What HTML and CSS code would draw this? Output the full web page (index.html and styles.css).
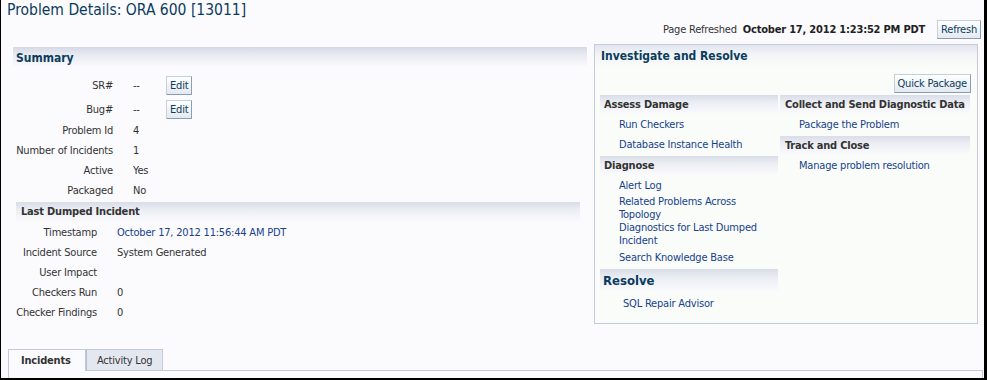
FILE: index.html
```html
<!DOCTYPE html>
<html lang="en">
<head>
  <meta charset="UTF-8">
  <title>Problem Details</title>
  <link rel="stylesheet" href="styles.css">
</head>
<body>
  <div class="page">
    <h1 class="title">Problem Details: ORA 600 [13011]</h1>

    <div class="refresh-bar">
      <span>Page Refreshed</span>
      <b class="refresh-date">October 17, 2012 1:23:52 PM PDT</b>
      <button class="btn">Refresh</button>
    </div>

    <div class="main">
      <div class="details">
        <div class="section-head">Summary</div>
        <div class="form summary-form">
          <div class="label">SR#</div>
          <div class="value"><span class="value-text">--</span><button class="btn">Edit</button></div>
          <div class="label">Bug#</div>
          <div class="value"><span class="value-text">--</span><button class="btn">Edit</button></div>
          <div class="label">Problem Id</div>
          <div class="value">4</div>
          <div class="label">Number of Incidents</div>
          <div class="value">1</div>
          <div class="label">Active</div>
          <div class="value">Yes</div>
          <div class="label">Packaged</div>
          <div class="value">No</div>
        </div>

        <div class="sub-head incident-head">Last Dumped Incident</div>
        <div class="form incident-form">
          <div class="label">Timestamp</div>
          <div class="value"><a class="link" href="#">October 17, 2012 11:56:44 AM PDT</a></div>
          <div class="label">Incident Source</div>
          <div class="value">System Generated</div>
          <div class="label">User Impact</div>
          <div class="value"></div>
          <div class="label">Checkers Run</div>
          <div class="value">0</div>
          <div class="label">Checker Findings</div>
          <div class="value">0</div>
        </div>
      </div>

      <div class="panel">
        <div class="panel-head">Investigate and Resolve</div>
        <div class="panel-tools"><button class="btn">Quick Package</button></div>
        <div class="panel-cols">
          <div class="col">
            <div class="sub-head">Assess Damage</div>
            <ul class="links">
              <li><a class="link" href="#">Run Checkers</a></li>
              <li><a class="link" href="#">Database Instance Health</a></li>
            </ul>
            <div class="sub-head">Diagnose</div>
            <ul class="links">
              <li><a class="link" href="#">Alert Log</a></li>
              <li><a class="link" href="#">Related Problems Across Topology</a></li>
              <li><a class="link" href="#">Diagnostics for Last Dumped Incident</a></li>
              <li><a class="link" href="#">Search Knowledge Base</a></li>
            </ul>
            <div class="sub-head resolve-head">Resolve</div>
            <ul class="links resolve-links">
              <li><a class="link" href="#">SQL Repair Advisor</a></li>
            </ul>
          </div>
          <div class="col col-right">
            <div class="sub-head">Collect and Send Diagnostic Data</div>
            <ul class="links">
              <li><a class="link" href="#">Package the Problem</a></li>
            </ul>
            <div class="sub-head">Track and Close</div>
            <ul class="links">
              <li><a class="link" href="#">Manage problem resolution</a></li>
            </ul>
          </div>
        </div>
      </div>
    </div>

    <div class="tabs">
      <div class="tab tab-active">Incidents</div>
      <div class="tab">Activity Log</div>
      <div class="tab-fill"></div>
    </div>
    <div class="tab-body"></div>
  </div>
</body>
</html>
```

FILE: styles.css
```css
body {
  margin: 0;
  font-family: "DejaVu Sans Condensed", "Liberation Sans", Arial, sans-serif;
  font-size: 11px;
  letter-spacing: -0.2px;
  color: #333333;
  background: #ffffff;
}

.page {
  width: 987px;
  height: 380px;
  box-sizing: border-box;
  border-left: 1px solid #000000;
  border-right: 3px solid #000000;
  border-bottom: 2px solid #000000;
  background: #fbfafd;
  overflow: hidden;
}

.title {
  margin: 0;
  padding-left: 6px;
  font-size: 15.5px;
  font-weight: normal;
  line-height: 20px;
  letter-spacing: 0;
  color: #0b3c5d;
}

.refresh-bar {
  display: flex;
  justify-content: flex-end;
  align-items: center;
  height: 19px;
  padding-right: 3px;
}

.refresh-date {
  margin: 0 12px 0 6px;
  color: #222222;
}

.btn {
  height: 19px;
  padding: 0 3px;
  font-family: inherit;
  font-size: 11px;
  letter-spacing: -0.2px;
  color: #0b3c5d;
  background: linear-gradient(#ffffff, #e4e9f0);
  border: 1px solid;
  border-color: #c6cfda #8c9db2 #8c9db2 #c6cfda;
  border-radius: 0;
}

.link {
  color: #163f8c;
  text-decoration: none;
}

/* layout */
.main {
  display: flex;
  align-items: flex-start;
  gap: 7px;
  padding: 5px 6px 0 12px;
}

.details {
  width: 574px;
  padding-top: 3px;
}

.section-head {
  height: 20px;
  padding: 3px 0 0 3px;
  box-sizing: border-box;
  font-size: 12px;
  font-weight: bold;
  line-height: 16px;
  letter-spacing: 0;
  color: #0b3c5d;
  background: linear-gradient(#d5d9e5 0, #e6e9f0 35%, #fbfafd 100%);
}

.sub-head {
  height: 19px;
  padding-left: 4px;
  font-weight: bold;
  line-height: 20px;
  white-space: nowrap;
  color: #333333;
  background: linear-gradient(#d9dde7 0, #eceef4 40%, #fbfbfd 100%);
}

.form {
  display: grid;
  column-gap: 20px;
  align-items: center;
}

.label {
  justify-self: end;
  white-space: nowrap;
}

.summary-form {
  grid-template-columns: 100px 1fr;
  grid-template-rows: 25px 22px repeat(4, 20px);
  padding-top: 6px;
}

.value {
  display: flex;
  align-items: center;
}

.value-text {
  width: 33px;
}

.incident-head {
  margin: 2px 7px 0 3px;
  height: 20px;
  padding-left: 5px;
}

.incident-form {
  grid-template-columns: 84px 1fr;
  grid-auto-rows: 20px;
}

/* investigate panel */
.panel {
  width: 384px;
  box-sizing: border-box;
  border: 1px solid #c5c9d8;
  background: #fafcfa;
  padding-bottom: 8px;
}

.panel-head {
  height: 22px;
  padding-left: 6px;
  font-size: 12px;
  font-weight: bold;
  line-height: 22px;
  letter-spacing: 0;
  color: #0b3c5d;
  background: linear-gradient(#e2e5ee 0, #f2f4f7 45%, #fafcfa 100%);
}

.panel-tools {
  display: flex;
  justify-content: flex-end;
  padding: 7px 6px 0 0;
}

.panel-cols {
  display: flex;
  gap: 2px;
  padding: 2px 7px 0 5px;
}

.col {
  width: 178px;
}

.col-right {
  width: 190px;
}

.col-right .sub-head {
  padding-left: 5px;
}

.links {
  list-style: none;
  margin: 0 0 2px;
  padding: 0 0 0 19px;
}

.links li {
  display: flex;
  align-items: center;
  min-height: 20px;
  line-height: 13px;
}

.resolve-head {
  height: 23px;
  padding-left: 3px;
  font-size: 13px;
  line-height: 24px;
  letter-spacing: 0;
  color: #0b3c5d;
}

.resolve-links {
  padding-left: 23px;
  margin-top: 1px;
}

/* tabs */
.tabs {
  display: flex;
  margin: 25px 1px 0 7px;
  height: 22px;
}

.tab {
  box-sizing: border-box;
  height: 22px;
  padding: 0 10px;
  line-height: 21px;
  border: 1px solid #c4cad8;
  border-bottom: none;
  background: #e3e8f0;
  color: #333333;
}

.tab + .tab {
  border-left: 1px solid #b4bccb;
  border-bottom: 1px solid #c4cad8;
}

.tab-active {
  width: 78px;
  padding-left: 12px;
  font-weight: bold;
  background: #fbfafd;
}

.tab-fill {
  flex: 1;
  border-bottom: 1px solid #c4cad8;
}

.tab-body {
  height: 9px;
  margin: 0 1px 0 7px;
  border-left: 1px solid #c4cad8;
  border-right: 1px solid #c4cad8;
}
```
